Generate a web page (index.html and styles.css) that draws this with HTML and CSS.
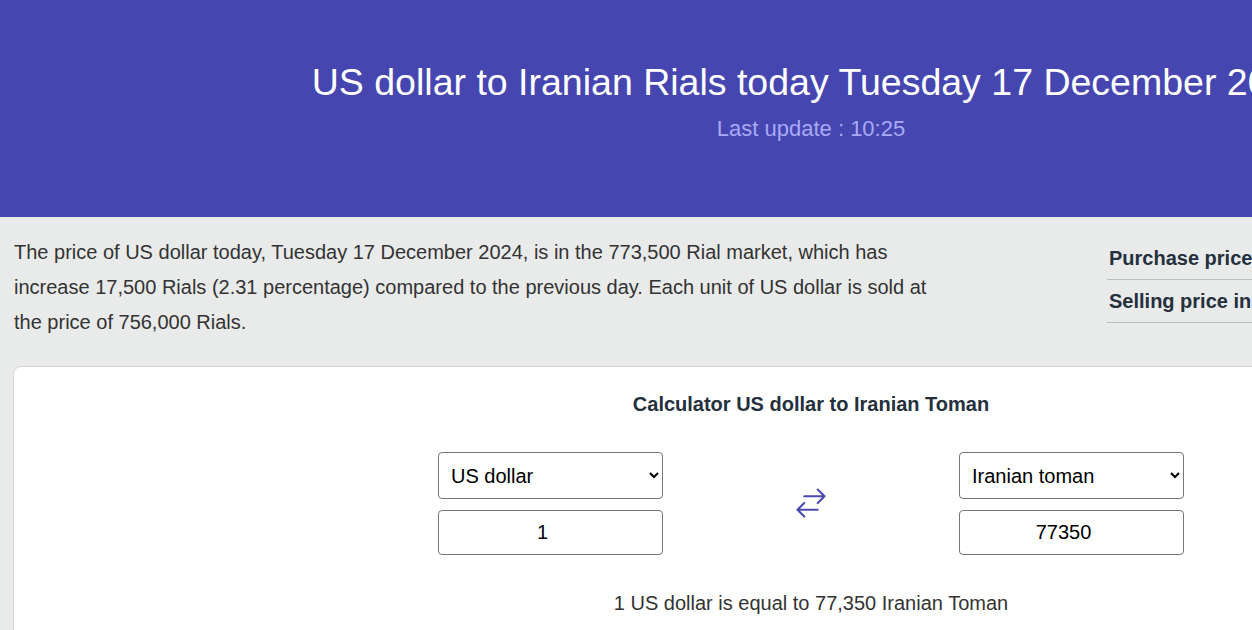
FILE: index.html
```html
<!DOCTYPE html>
<html>
<head>
<meta charset="utf-8">
<link rel="stylesheet" href="styles.css">
</head>
<body>
<div class="page">
  <header class="hero">
    <h1 class="hero-title">US dollar to Iranian Rials today Tuesday 17 December 2024</h1>
    <div class="hero-sub">Last update : 10:25</div>
  </header>
  <section class="summary">
    <p class="summary-text">The price of US dollar today, Tuesday 17 December 2024, is in the 773,500 Rial market, which has increase 17,500 Rials (2.31 percentage) compared to the previous day. Each unit of US dollar is sold at the price of 756,000 Rials.</p>
    <div class="prices">
      <div class="price-row">Purchase price in the market</div>
      <div class="price-row">Selling price in the market</div>
    </div>
  </section>
  <section class="card">
    <h2 class="card-title">Calculator US dollar to Iranian Toman</h2>
    <div class="calc">
      <div class="calc-col">
        <select class="field sel"><option>US dollar</option></select>
        <input class="field num" type="text" value="1">
      </div>
      <div class="swap">
        <svg width="36" height="36" viewBox="0 0 24 24" fill="none" stroke="#4a4ab2" stroke-width="1.4" stroke-linecap="round" stroke-linejoin="round"><path d="M7.5 21L3 16.5m0 0L7.5 12M3 16.5h13.5m0-13.5L21 7.5m0 0L16.5 12M21 7.5H7.5"/></svg>
      </div>
      <div class="calc-col">
        <select class="field sel"><option>Iranian toman</option></select>
        <input class="field num" type="text" value="77350">
      </div>
    </div>
    <p class="result">1 US dollar is equal to 77,350 Iranian Toman</p>
  </section>
</div>
</body>
</html>
```

FILE: styles.css
```css
html { overflow: hidden; }
body {
  margin: 0;
  background: #e9eaea;
  font-family: "Liberation Sans", Arial, sans-serif;
  color: #2f3033;
}
.page {
  width: 1622px;
}
.hero {
  background: #4646b0;
  height: 217px;
  box-sizing: border-box;
  padding-top: 61px;
  text-align: center;
}
.hero-title {
  margin: 0;
  font-size: 37.5px;
  font-weight: normal;
  color: #ffffff;
  line-height: 42px;
}
.hero-sub {
  margin-top: 13px;
  font-size: 22px;
  color: #a9a9f5;
  line-height: 26px;
}
.summary {
  display: flex;
  padding: 0 14px;
  margin-top: 18px;
}
.summary-text {
  margin: 0;
  width: 920px;
  font-size: 20px;
  line-height: 35px;
  color: #333333;
}
.prices {
  margin-left: 173px;
  margin-top: 2px;
  width: 440px;
}
.price-row {
  font-size: 20px;
  font-weight: bold;
  color: #25303d;
  padding-left: 2px;
  border-bottom: 1px solid #bdbdbd;
  line-height: 42px;
  white-space: nowrap;
}
.card {
  margin: 26px 13px 0;
  background: #ffffff;
  border: 1px solid #d2d2d2;
  border-radius: 8px;
  padding: 25px 0 40px;
  text-align: center;
}
.card-title {
  margin: 0;
  font-size: 20px;
  font-weight: bold;
  color: #25303d;
  line-height: 24px;
}
.calc {
  display: flex;
  justify-content: center;
  align-items: center;
  margin-top: 36px;
}
.calc-col {
  display: flex;
  flex-direction: column;
  gap: 11px;
  width: 225px;
}
.swap {
  width: 296px;
  display: flex;
  justify-content: center;
  padding-bottom: 2px;
}
.field {
  box-sizing: border-box;
  width: 225px;
  border: 1px solid #767676;
  border-radius: 4px;
  background: #ffffff;
  font-family: "Liberation Sans", Arial, sans-serif;
  font-size: 20px;
  color: #000000;
}
.sel {
  height: 47px;
  padding: 0 8px;
}
.num {
  height: 45px;
  text-align: center;
  padding: 0 16px 0 0;
}
.result {
  margin: 36px 0 0;
  font-size: 20px;
  color: #333333;
  line-height: 24px;
}
```
